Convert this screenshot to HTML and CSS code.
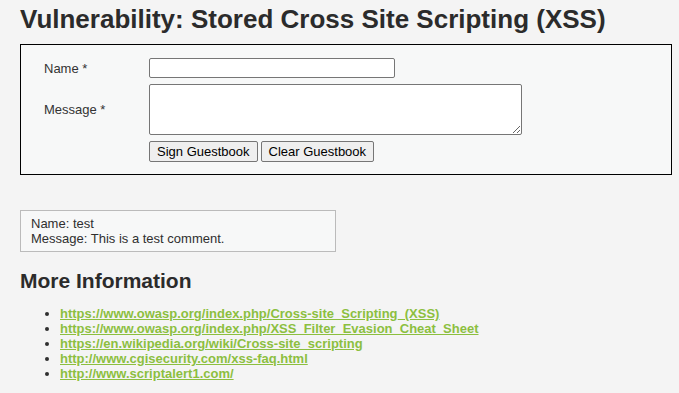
FILE: index.html
```html
<!DOCTYPE html>
<html lang="en">
<head>
  <meta charset="UTF-8">
  <title>Vulnerability: Stored Cross Site Scripting (XSS)</title>
  <link rel="stylesheet" href="styles.css">
</head>
<body>
  <div class="body-padded">
    <h1>Vulnerability: Stored Cross Site Scripting (XSS)</h1>

    <div class="vulnerable-code-area">
      <form class="guestbook" name="guestform" onsubmit="return false;">
        <label class="field-label" for="txtName">Name *</label>
        <input class="txt-name" id="txtName" type="text" name="txtName">
        <label class="field-label" for="mtxMessage">Message *</label>
        <textarea class="mtx-message" id="mtxMessage" name="mtxMessage"></textarea>
        <span></span>
        <div class="btn-row">
          <input type="submit" class="btn" value="Sign Guestbook">
          <input type="button" class="btn" value="Clear Guestbook">
        </div>
      </form>
    </div>

    <div class="guestbook-comments">
      Name: test<br>
      Message: This is a test comment.
    </div>

    <h2>More Information</h2>
    <ul class="more-info">
      <li><a href="#">https://www.owasp.org/index.php/Cross-site_Scripting_(XSS)</a></li>
      <li><a href="#">https://www.owasp.org/index.php/XSS_Filter_Evasion_Cheat_Sheet</a></li>
      <li><a href="#">https://en.wikipedia.org/wiki/Cross-site_scripting</a></li>
      <li><a href="#">http://www.cgisecurity.com/xss-faq.html</a></li>
      <li><a href="#">http://www.scriptalert1.com/</a></li>
    </ul>
  </div>
</body>
</html>
```

FILE: styles.css
```css
body {
  margin: 0;
  background: #f4f4f4;
  color: #2f2f2f;
  font-family: Arial, "Liberation Sans", Helvetica, sans-serif;
  font-size: 12px;
}
.body-padded {
  padding: 0 7px 0 20px;
}
h1 {
  margin: 0;
  padding-top: 5px;
  font-size: 26px;
  line-height: 29px;
  font-weight: bold;
  color: #2b2b2b;
}
.vulnerable-code-area {
  margin-top: 10px;
  background: #f7f8f8;
  border: 1px solid #000;
  padding: 13px 10px 12px 23px;
}
.guestbook {
  display: grid;
  grid-template-columns: 105px auto;
  row-gap: 6px;
  align-items: center;
  justify-items: start;
}
.field-label {
  font-size: 13px;
  color: #333;
}
.txt-name {
  width: 246px;
  height: 20px;
  box-sizing: border-box;
  border: 1px solid #767676;
  border-radius: 2px;
  background: #fff;
  margin: 0;
}
.mtx-message {
  width: 373px;
  height: 51px;
  box-sizing: border-box;
  border: 1px solid #767676;
  border-radius: 2px;
  background: #fff;
  margin: 0;
  resize: both;
}
.btn-row {
  display: flex;
  gap: 3px;
}
.btn {
  font-family: Arial, "Liberation Sans", sans-serif;
  font-size: 13px;
  height: 21px;
  padding: 0 7px;
  margin: 0;
  background: #efefef;
  border: 1px solid #767676;
  border-radius: 2px;
  color: #000;
}
.guestbook-comments {
  margin-top: 35px;
  width: 304px;
  background: #f7f8f8;
  border: 1px solid #bbb;
  padding: 5px 0 5px 10px;
  font-size: 13px;
  line-height: 15px;
  color: #2f2f2f;
}
h2 {
  margin: 16px 0 0;
  font-size: 21px;
  line-height: 26px;
  color: #2b2b2b;
}
.more-info {
  margin: 12px 0 0;
  padding-left: 40px;
  font-size: 13px;
  line-height: 15px;
}
.more-info a {
  color: #8cbf3f;
  font-weight: bold;
}
```
